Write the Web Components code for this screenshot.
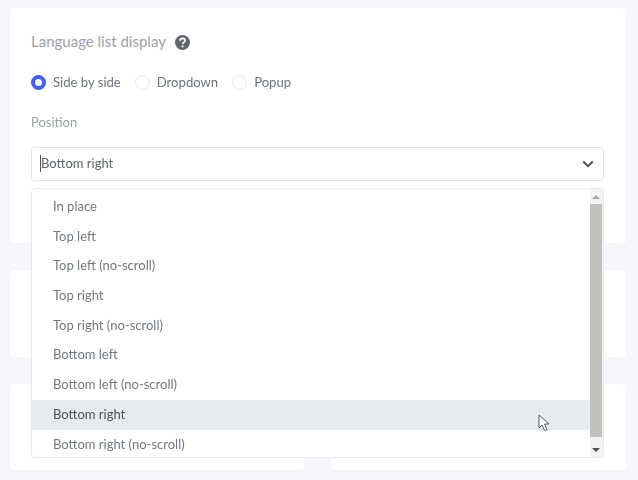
<!DOCTYPE html>
<html>
<head>
<meta charset="utf-8">
<style>
  html, body { margin: 0; height: 100%; overflow: hidden; background: #f4f6fa; }
  body { font-family: "Lato", "Noto Sans", sans-serif; }
</style>
</head>
<body>
<settings-page>
  <settings-card style="height: 235px">
    <field-label hint>Language list display</field-label>
    <radio-group>
      <radio-option checked>Side by side</radio-option>
      <radio-option>Dropdown</radio-option>
      <radio-option>Popup</radio-option>
    </radio-group>
    <field-label small>Position</field-label>
    <select-box value="Bottom right">
      <select-item>In place</select-item>
      <select-item>Top left</select-item>
      <select-item>Top left (no-scroll)</select-item>
      <select-item>Top right</select-item>
      <select-item>Top right (no-scroll)</select-item>
      <select-item>Bottom left</select-item>
      <select-item>Bottom left (no-scroll)</select-item>
      <select-item active>Bottom right</select-item>
      <select-item>Bottom right (no-scroll)</select-item>
    </select-box>
  </settings-card>
  <settings-card style="height: 87px"></settings-card>
  <card-row>
    <settings-card style="height: 86px"></settings-card>
    <settings-card style="height: 86px"></settings-card>
  </card-row>
</settings-page>

<script>
function define(tag, css, html) {
  customElements.define(tag, class extends HTMLElement {
    constructor() {
      super();
      this.shadow = this.attachShadow({ mode: "open" });
      this.shadow.innerHTML = "<style>" + css + "</style>" + (typeof html === "function" ? html(this) : html);
    }
  });
}

define("settings-page", `
  :host { display: flex; flex-direction: column; gap: 27px; padding: 8px 12px 0 10px; filter: blur(0.35px); }
`, `<slot></slot>`);

define("card-row", `
  :host { display: grid; grid-template-columns: 294px 295px; gap: 27px; }
`, `<slot></slot>`);

define("settings-card", `
  :host { display: block; box-sizing: border-box; background: #fff; border-radius: 4px; padding: 21px 22px 0 21px; }
`, `<slot></slot>`);

define("field-label", `
  :host { display: flex; align-items: center; gap: 9px; height: 24px; color: #9aa1ab; font-size: 15px; }
  :host([small]) { font-size: 13px; height: 18px; margin-top: 21px; }
  svg { display: none; width: 15px; height: 15px; margin-top: 3px; }
  :host([hint]) svg { display: block; }
`, `<slot></slot><svg viewBox="0 0 15 15"><circle cx="7.5" cy="7.5" r="7.5" fill="#62666d"/><path d="M5.1 5.8c.1-1.5 1.1-2.4 2.5-2.4 1.4 0 2.4.8 2.4 2 0 1-.5 1.5-1.3 2-.6.4-.8.7-.8 1.3v.3" fill="none" stroke="#fff" stroke-width="1.7"/><circle cx="7.5" cy="11.4" r="1.1" fill="#fff"/></svg>`);

define("radio-group", `
  :host { display: flex; gap: 14px; margin-top: 19px; height: 20px; align-items: center; }
`, `<slot></slot>`);

define("radio-option", `
  :host { display: flex; align-items: center; gap: 7px; color: #6d737c; font-size: 13.1px; }
  i { box-sizing: border-box; width: 15px; height: 15px; border-radius: 50%; border: 1px solid #e6e9ee; background: #fff; }
  :host([checked]) i { border: 4.5px solid #3f5efb; }
`, `<i></i><slot></slot>`);

define("select-box", `
  :host { display: block; position: relative; margin-top: 16px; }
  .control { box-sizing: border-box; height: 34px; border: 1px solid #dfe2e8; border-radius: 4px; display: flex; align-items: center; justify-content: space-between; padding: 0 9px 1px; color: #5e646d; font-size: 13px; }
  .value { border-left: 1px solid #555; line-height: 17px; margin-left: -1px; }
  svg { width: 12px; height: 8px; margin-top: 1px; }
  .menu { position: absolute; left: 0; right: 0; top: 41px; height: 270px; box-sizing: border-box; background: #fff; border: 1px solid #e7eaef; border-radius: 4px; display: flex; overflow: hidden; }
  .list { flex: 1; padding-top: 3px; }
  .bar { width: 13px; background: #f3f3f3; display: flex; flex-direction: column; }
  .arrow { width: 12px; display: flex; align-items: center; justify-content: center; }
  .up { height: 15px; }
  .down { height: 20px; padding-top: 5px; box-sizing: border-box; }
  .arrow b { width: 0; height: 0; border: 4px solid transparent; }
  .up b { border-top: 0; border-bottom: 4px solid #a3a3a3; }
  .down b { border-bottom: 0; border-top: 4px solid #505050; }
  .thumb { flex: 1; width: 12px; background: #c0c0bd; }
`, (el) => `
  <div class="control"><span class="value">${el.getAttribute("value")}</span>
    <svg viewBox="0 0 12 8"><path d="M1.2 1.5 6 6.2l4.8-4.7" fill="none" stroke="#4c5157" stroke-width="2"/></svg></div>
  <div class="menu"><div class="list"><slot></slot></div>
    <div class="bar"><div class="arrow up"><b></b></div><div class="thumb"></div><div class="arrow down"><b></b></div></div></div>`);

define("select-item", `
  :host { display: block; box-sizing: border-box; height: 29.7px; line-height: 29.7px; padding-left: 21px; color: #737982; font-size: 13px; position: relative; }
  :host([active]) { background: #e8ebed; color: #4d5259; }
  svg { display: none; position: absolute; left: 506px; top: 14px; width: 13px; height: 18px; }
  :host([active]) svg { display: block; }
`, `<slot></slot><svg viewBox="0 0 13 18"><path d="M1 1v13l3-3 2.5 5.5 2.5-1L6.5 10H11z" fill="#fff" stroke="#555b62" stroke-width="1"/></svg>`);
</script>
</body>
</html>
